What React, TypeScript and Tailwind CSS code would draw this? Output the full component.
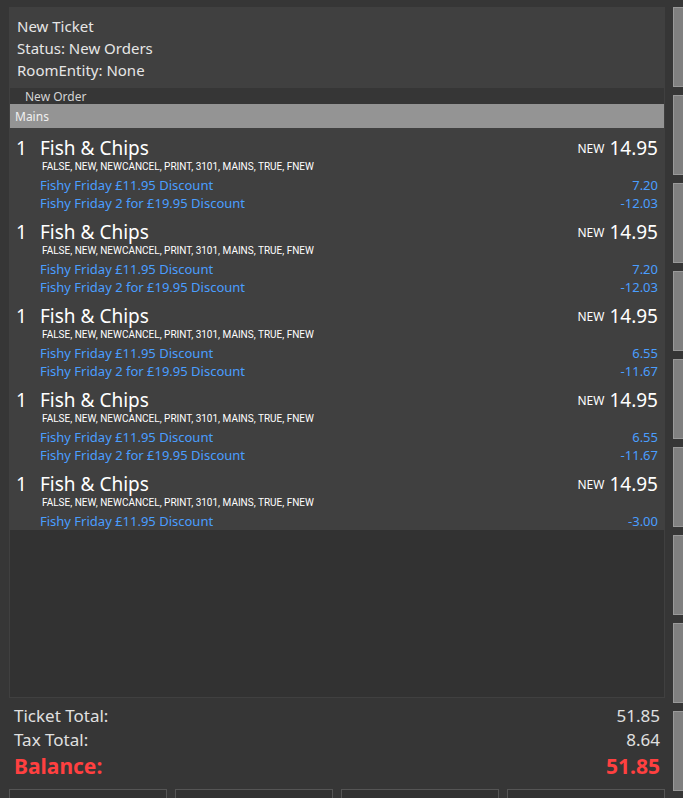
import React from 'react';

interface Discount {
  name: string;
  amount: string;
}

interface Order {
  id: number;
  quantity: number;
  name: string;
  price: string;
  discounts: Discount[];
}

const SINGLE = 'Fishy Friday £11.95 Discount';
const DOUBLE = 'Fishy Friday 2 for £19.95 Discount';
const STATES = 'FALSE, NEW, NEWCANCEL, PRINT, 3101, MAINS, TRUE, FNEW';

const fish = (id: number, discounts: Discount[]): Order => ({
  id,
  quantity: 1,
  name: 'Fish & Chips',
  price: '14.95',
  discounts,
});

const orders: Order[] = [
  fish(1, [{ name: SINGLE, amount: '7.20' }, { name: DOUBLE, amount: '-12.03' }]),
  fish(2, [{ name: SINGLE, amount: '7.20' }, { name: DOUBLE, amount: '-12.03' }]),
  fish(3, [{ name: SINGLE, amount: '6.55' }, { name: DOUBLE, amount: '-11.67' }]),
  fish(4, [{ name: SINGLE, amount: '6.55' }, { name: DOUBLE, amount: '-11.67' }]),
  fish(5, [{ name: SINGLE, amount: '-3.00' }]),
];

function OrderLine({ order }: { order: Order }) {
  return (
    <li className="pt-2 px-[6px]">
      <div className="flex items-center text-[19px] leading-[25px]">
        <span className="w-6 shrink-0">{order.quantity}</span>
        <span className="flex-1">{order.name}</span>
        <span className="text-[12px] mr-[5px]">NEW</span>
        <span>{order.price}</span>
      </div>
      <p className="pl-[26px] pb-[3px] font-['Roboto','Noto_Sans',sans-serif] text-[10px] leading-3">{STATES}</p>
      {order.discounts.map((d) => (
        <div key={d.name} className="pl-6 flex justify-between text-[13px] leading-[18px] text-[#4a9eff]">
          <span>{d.name}</span>
          <span>{d.amount}</span>
        </div>
      ))}
    </li>
  );
}

export default function App() {
  return (
    <div className="h-screen overflow-hidden flex gap-2 pt-[7px] pl-[9px] bg-[#363636] text-white font-['Noto_Sans','Open_Sans',sans-serif]">
      <main className="flex-1 min-w-0 flex flex-col">
        {/* Ticket panel */}
        <section className="flex-1 min-h-0 border border-[#404040] bg-[#323232]">
          <header className="bg-[#404040] py-[7px] pl-[7px] text-[15px] leading-[22px] text-[#e6e6e6]">
            <h1>New Ticket</h1>
            <p>Status: New Orders</p>
            <p>RoomEntity: None</p>
          </header>
          <h2 className="bg-[#363636] pt-[2px] pl-[15px] text-[12px] leading-[14px] text-[#d4d4d4]">New Order</h2>
          <h3 className="bg-[#949494] pt-[2px] pl-[5px] text-[12px] leading-[22px] text-[#f0f0f0]">Mains</h3>
          <ul className="bg-[#404040]">
            {orders.map((order) => (
              <OrderLine key={order.id} order={order} />
            ))}
          </ul>
        </section>

        {/* Totals */}
        <dl className="pt-[6px] pb-[9px] px-[5px] text-[17px] leading-6 text-[#e0e0e0]">
          <div className="flex justify-between">
            <dt>Ticket Total:</dt>
            <dd>51.85</dd>
          </div>
          <div className="flex justify-between">
            <dt>Tax Total:</dt>
            <dd>8.64</dd>
          </div>
          <div className="flex justify-between text-[21px] leading-7 font-bold text-[#ff4040]">
            <dt>Balance:</dt>
            <dd>51.85</dd>
          </div>
        </dl>

        {/* Ticket commands, cut off by the bottom of the window */}
        <div className="h-[9px] shrink-0 overflow-hidden grid grid-cols-4 gap-2">
          {[1, 2, 3, 4].map((n) => (
            <button key={n} type="button" aria-label={`Ticket command ${n}`} className="h-20 border border-[#555555] bg-[#323232]" />
          ))}
        </div>
      </main>

      {/* Category buttons, cut off by the right side of the window */}
      <nav className="w-[10px] shrink-0 overflow-hidden flex flex-col gap-2">
        {[1, 2, 3, 4, 5, 6, 7, 8, 9].map((n) => (
          <button key={n} type="button" aria-label={`Category ${n}`} className="h-20 w-32 shrink-0 border border-[#999999] bg-[#808080]" />
        ))}
      </nav>
    </div>
  );
}
